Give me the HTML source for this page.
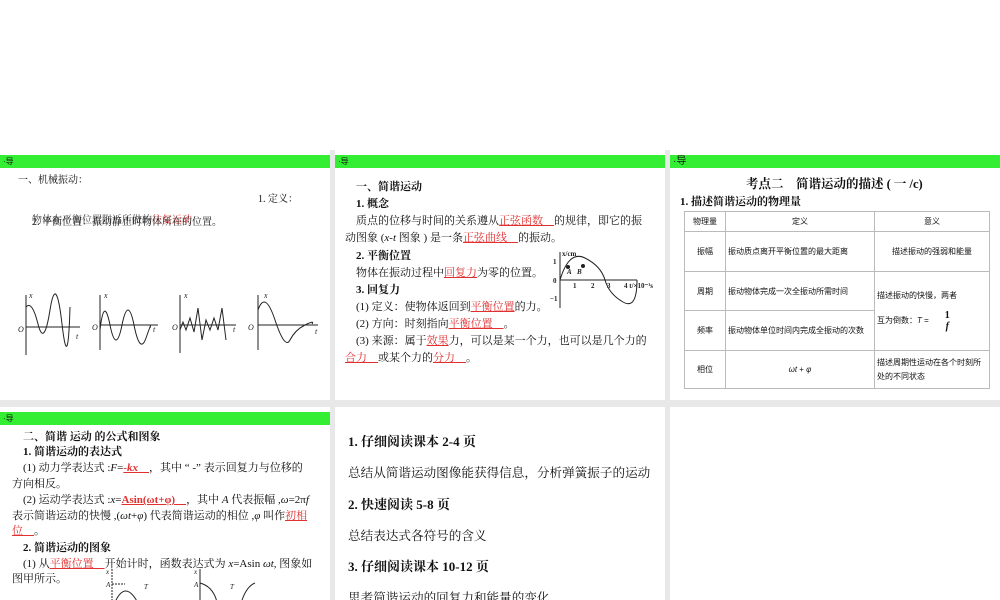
<!DOCTYPE html>
<html><head><meta charset="utf-8"><style>
*{margin:0;padding:0;box-sizing:border-box}
body{width:1000px;height:600px;background:#fff;position:relative;overflow:hidden;font-family:"Liberation Serif","Noto Serif CJK SC",serif;color:#111}
.gray{position:absolute;left:0;top:150px;width:1000px;height:450px;background:#e8e8e8}
.p{position:absolute;background:#fff;overflow:hidden}
.g{position:absolute;left:0;top:5px;height:13px;width:100%;background:#33ee33;font-size:8px;line-height:13px;padding-left:3px;font-family:"Liberation Sans","Noto Sans CJK SC",sans-serif}
.t{position:absolute;white-space:nowrap;font-size:11px;line-height:14px}
.b{font-weight:bold}
.r{color:#e03030;text-decoration:underline}
table{position:absolute;border-collapse:collapse;font-size:8px;font-family:"Liberation Sans","Noto Sans CJK SC",sans-serif}
td{border:1px solid #bbb;padding:0 2px}
</style></head><body>
<div class="gray"></div>

<div class="p" style="left:0;top:150px;width:330px;height:250px">
<div class="g">·导</div>
<div class="t" style="left:18px;top:24px;font-size:10px">一、机械振动：</div>
<div class="t" style="left:258px;top:43px;font-size:10px">1. 定义：</div>
<div class="t" style="left:32px;top:64px;font-size:10px;color:#444">物体在平衡位置附近所做的<span style="color:#e03030">往复运动</span></div>
<div class="t" style="left:32px;top:66px;font-size:10px">2. 平衡位置：振动静止时物体所在的位置。</div>
<svg style="position:absolute;left:0;top:0" width="330" height="250" fill="none" stroke="#222" stroke-width="1">
<g font-size="8" font-style="italic" fill="#222" stroke="none" font-family="Liberation Serif"><text x="29" y="148">x</text><text x="18" y="182">O</text><text x="76" y="189">t</text>
<text x="104" y="148">x</text><text x="92" y="180">O</text><text x="153" y="182">t</text>
<text x="184" y="148">x</text><text x="172" y="180">O</text><text x="233" y="182">t</text>
<text x="264" y="148">x</text><text x="248" y="180">O</text><text x="315" y="184">t</text></g>
<path d="M26 145V205M26 177H80"/><path d="M26 157Q32 150 38 174T50 160 62 174 70 157"/>
<path d="M100 145V200M100 175H158"/><path d="M100 180Q104 145 110 175T122 175 134 175 146 188 150 178"/>
<path d="M180 145V203M180 175H236"/><path d="M180 180L183 172 186 180 190 168 194 182 198 158 202 190 206 170 210 180 214 168 218 180 222 158 226 190"/>
<path d="M258 145V200M258 175H318"/><path d="M258 160Q265 140 275 170T290 190 305 175 312 174"/>
</svg>
</div>

<div class="p" style="left:335px;top:150px;width:330px;height:250px">
<div class="g">·导</div>
<div class="t b" style="left:21px;top:30px">一、简谐运动</div>
<div class="t b" style="left:21px;top:47px">1. 概念</div>
<div class="t" style="left:21px;top:64px">质点的位移与时间的关系遵从<span class="r">正弦函数　</span>的规律，即它的振</div>
<div class="t" style="left:10px;top:81px">动图象 (<i>x-t</i> 图象 ) 是一条<span class="r">正弦曲线　</span>的振动。</div>
<div class="t b" style="left:21px;top:99px">2. 平衡位置</div>
<div class="t" style="left:21px;top:116px">物体在振动过程中<span class="r">回复力</span>为零的位置。</div>
<div class="t b" style="left:21px;top:133px">3. 回复力</div>
<div class="t" style="left:21px;top:150px">(1) 定义：使物体返回到<span class="r">平衡位置</span>的力。</div>
<div class="t" style="left:21px;top:167px">(2) 方向：时刻指向<span class="r">平衡位置　</span>。</div>
<div class="t" style="left:21px;top:184px">(3) 来源：属于<span class="r">效果</span>力，可以是某一个力，也可以是几个力的</div>
<div class="t" style="left:10px;top:201px"><span class="r">合力　</span>或某个力的<span class="r">分力　</span>。</div>
<svg style="position:absolute;left:210px;top:100px" width="120" height="60" fill="none" stroke="#222" stroke-width="1">
<path d="M15 2V58M15 30H92"/><path d="M15 30Q24 0 40 8T60 30 78 52 92 30"/>
<circle cx="23" cy="17" r="1.5" fill="#222"/><circle cx="38" cy="16" r="1.5" fill="#222"/>
<g font-size="7" fill="#222" stroke="none" font-weight="bold" font-family="Liberation Serif"><text x="17" y="6">x/cm</text><text x="8" y="14">1</text><text x="8" y="33">0</text><text x="5" y="51">−1</text><text x="22" y="24" font-style="italic">A</text><text x="32" y="24" font-style="italic">B</text><text x="28" y="38">1</text><text x="46" y="38">2</text><text x="62" y="38">3</text><text x="79" y="38">4 t/×10⁻¹s</text></g>
</svg>
</div>

<div class="p" style="left:670px;top:150px;width:330px;height:250px">
<div class="g" style="font-size:10px">·导</div>
<div class="t b" style="left:76px;top:27px;font-size:12.5px">考点二　简谐运动的描述 ( 一 /c)</div>
<div class="t b" style="left:10px;top:45px;font-size:11px">1. 描述简谐运动的物理量</div>
<table style="left:14px;top:61px;width:306px">
<tr style="height:20px"><td style="width:41px;text-align:center">物理量</td><td style="width:149px;text-align:center">定义</td><td style="text-align:center">意义</td></tr>
<tr style="height:40px"><td style="text-align:center">振幅</td><td>振动质点离开平衡位置的最大距离</td><td style="text-align:center">描述振动的强弱和能量</td></tr>
<tr style="height:39px"><td style="text-align:center">周期</td><td>振动物体完成一次全振动所需时间</td><td rowspan="2">描述振动的快慢，两者<br><br>互为倒数：<i>T</i> =　　<span style="display:inline-block;vertical-align:middle;text-align:center;font-size:10px;font-weight:bold;font-family:Liberation Serif;line-height:11px">1<br><i>f</i></span></td></tr>
<tr style="height:40px"><td style="text-align:center">频率</td><td>振动物体单位时间内完成全振动的次数</td></tr>
<tr style="height:38px"><td style="text-align:center">相位</td><td style="text-align:center"><i>ωt</i> + <i>φ</i></td><td style="line-height:14px">描述周期性运动在各个时刻所<br>处的不同状态</td></tr>
</table>
</div>

<div class="p" style="left:0;top:407px;width:330px;height:193px">
<div class="g">·导</div>
<div class="t b" style="left:23px;top:23px">二、简谐 运动 的公式和图象</div>
<div class="t b" style="left:23px;top:38px">1. 简谐运动的表达式</div>
<div class="t" style="left:23px;top:54px">(1) 动力学表达式 :<i>F</i>=<span class="r b"><i>-kx</i>　</span>，其中 “ -” 表示回复力与位移的</div>
<div class="t" style="left:12px;top:70px">方向相反。</div>
<div class="t" style="left:23px;top:86px">(2) 运动学表达式 :<i>x</i>=<span class="r b">Asin(ωt+φ)　</span>，其中 <i>A</i> 代表振幅 ,<i>ω</i>=2π<i>f</i></div>
<div class="t" style="left:12px;top:102px">表示简谐运动的快慢 ,(<i>ωt</i>+<i>φ</i>) 代表简谐运动的相位 ,<i>φ</i> 叫作<span class="r">初相</span></div>
<div class="t" style="left:12px;top:117px"><span class="r">位　</span>。</div>
<div class="t b" style="left:23px;top:134px">2. 简谐运动的图象</div>
<div class="t" style="left:23px;top:150px">(1) 从<span class="r">平衡位置　</span>开始计时，函数表达式为 <i>x</i>=Asin <i>ωt</i>, 图象如</div>
<div class="t" style="left:12px;top:165px">图甲所示。</div>
<svg style="position:absolute;left:100px;top:160px" width="200" height="40" fill="none" stroke="#222" stroke-width="1">
<path d="M12 2V40M12 17H25" stroke-dasharray="2 1"/><path d="M13 40Q25 8 40 40"/>
<path d="M100 2V40M100 16Q115 20 118 40M140 40Q145 20 155 16"/>
<g font-size="7" fill="#222" stroke="none" font-style="italic"><text x="6" y="7">x</text><text x="6" y="20">A</text><text x="44" y="22">T</text>
<text x="94" y="7">x</text><text x="94" y="20">A</text><text x="130" y="22">T</text></g>
</svg>
</div>

<div class="p" style="left:335px;top:407px;width:330px;height:193px">
<div class="t b" style="left:13px;top:28px;font-size:13px">1. 仔细阅读课本 2-4 页</div>
<div class="t" style="left:13px;top:59px;font-size:12.6px">总结从简谐运动图像能获得信息，分析弹簧振子的运动</div>
<div class="t b" style="left:13px;top:91px;font-size:13px">2. 快速阅读 5-8 页</div>
<div class="t" style="left:13px;top:122px;font-size:12.6px">总结表达式各符号的含义</div>
<div class="t b" style="left:13px;top:153px;font-size:13px">3. 仔细阅读课本 10-12 页</div>
<div class="t" style="left:13px;top:184px;font-size:12.6px">思考简谐运动的回复力和能量的变化</div>
</div>

<div class="p" style="left:670px;top:407px;width:330px;height:193px"></div>
</body></html>
